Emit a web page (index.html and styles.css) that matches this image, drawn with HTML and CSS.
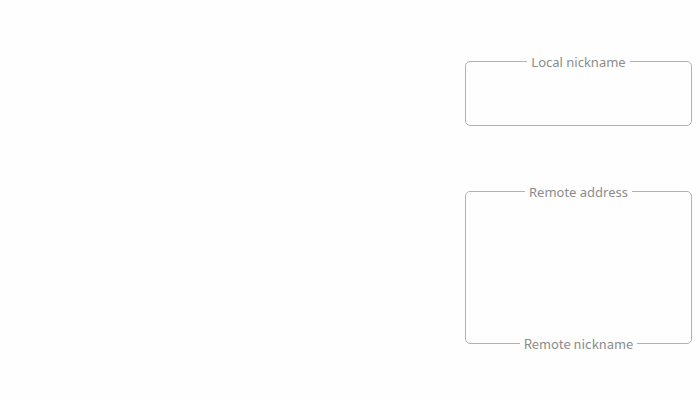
FILE: index.html
```html
<!DOCTYPE html>
<html lang="en">
<head>
<meta charset="utf-8">
<title>Connection</title>
<link rel="stylesheet" href="styles.css">
</head>
<body>
<main class="panel">
  <section class="group">
    <h2 class="caption caption-top">Local nickname</h2>
  </section>
  <section class="group group-tall">
    <h2 class="caption caption-top">Remote address</h2>
    <h2 class="caption caption-bottom">Remote nickname</h2>
  </section>
</main>
</body>
</html>
```
FILE: styles.css
```css
* {
  box-sizing: border-box;
}

body {
  margin: 0;
  background: #fefefe;
  color: #8c8c8c;
  font: 13px/20px "Noto Sans", "Open Sans", sans-serif;
}

.panel {
  display: flex;
  flex-direction: column;
  align-items: flex-end;
  gap: 65px;
  padding: 61px 8px 56px;
}

.group {
  display: flex;
  flex-direction: column;
  align-items: center;
  justify-content: space-between;
  width: 33%;
  min-width: 227px;
  min-height: 65px;
  border: 1px solid #b2b2b2;
  border-radius: 5px;
}

.group-tall {
  min-height: 153px;
}

.caption {
  margin: 0;
  padding: 0 4px;
  background: #fefefe;
  font-size: 13px;
  font-weight: 400;
  white-space: nowrap;
}

/* Captions are centred on the border lines */
.caption-top {
  margin-top: -10px;
}

.caption-bottom {
  margin-bottom: -11px;
  font-family: "Noto Sans CJK SC", "Noto Sans", sans-serif;
}
```
